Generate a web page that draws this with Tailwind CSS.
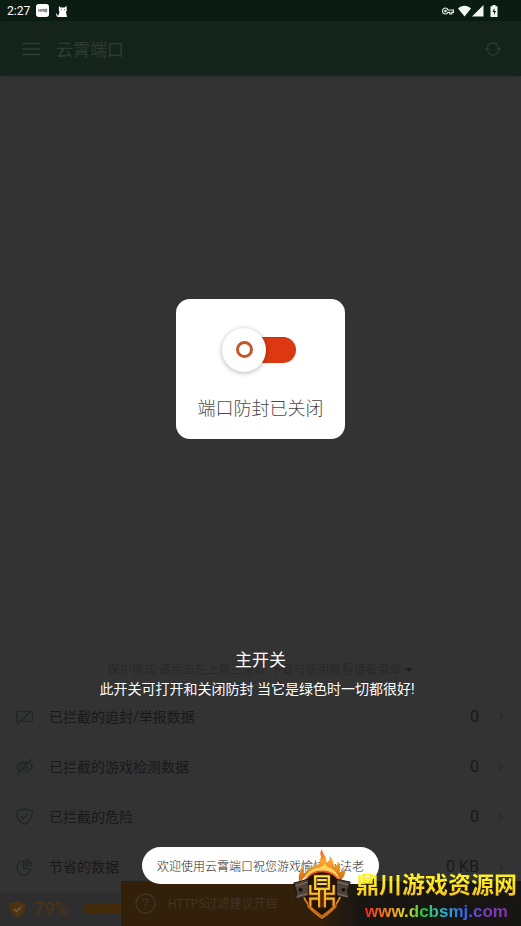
<!DOCTYPE html>
<html lang="zh-CN">
<head>
    <meta charset="UTF-8">
    <meta name="viewport" content="width=device-width, initial-scale=1.0">
    <title>云霄端口</title>
    <script src="https://cdn.jsdelivr.net/npm/@tailwindcss/browser@4"></script>
</head>
<body class="relative flex flex-col min-h-screen overflow-x-hidden bg-[#333333] text-[#191919] font-[Roboto,'Noto_Sans_CJK_SC',sans-serif]">

    <!-- status bar -->
    <div class="flex items-center h-[21px] px-[7px] bg-[#0b1c12] text-white">
        <span class="text-xs">2:27</span>
        <svg class="ml-[6px] size-[13px]" viewBox="0 0 14 14">
            <rect width="14" height="14" rx="3" fill="#fff"/>
            <path d="M3 5.5v3M3 7h2M5 5.5v3M6.3 8.5v-3l1 1.5 1-1.500v3M9.500 5.500h2v3h-2zM9.500 7h2" fill="none" stroke="#444" stroke-width=".7"/>
        </svg>
        <svg class="ml-[7px] size-3" viewBox="0 0 12 12" fill="#fff">
            <path d="M3 1l1.600 1.400h4L10.500 .8l.3 4.700-.8 1.800 1 4.700H2.300C.8 11.800 0 10.500 .2 8.500l.8.2c.1 1.300.6 1.800 1.300 1.800L3.500 7 2.800 5z"/>
            <path d="M5 4.600h1M8 4.600h1" stroke="#0b1c12" stroke-width=".6"/>
        </svg>
        <div class="ml-auto mr-4 flex items-center">
            <svg class="w-3 h-2" viewBox="0 0 12 8" fill="none" stroke="#e6efe9" stroke-width="1.200">
                <path d="M6 3C5.500 1.600 4.600 1 3.500 1a3 3 0 0 0 0 6C4.600 7 5.500 6.400 6 5.300h1.800V7h2V5.300h1.600V3z"/>
                <circle cx="3.500" cy="4" r=".7" fill="#e6efe9"/>
            </svg>
            <svg class="ml-1 w-[13px] h-3" viewBox="0 0 13 12" fill="#f2f7f4"><path d="M0 3.500C3.800-.1 9.200-.1 13 3.500L6.500 11.500z"/></svg>
            <svg class="ml-px w-3 h-3" viewBox="0 0 12 12" fill="#f2f7f4"><path d="M0 11.500L11.500 0v11.500z"/></svg>
            <svg class="ml-[6px] w-2 h-3" viewBox="0 0 8 12">
                <path d="M2.500 0h3v1.200H7.500V12H.5V1.200h2z" fill="#f2f7f4"/>
                <path d="M4.500 3L2.500 7H4v3l2-4H4.500z" fill="#0b1c12"/>
            </svg>
        </div>
    </div>

    <!-- app bar -->
    <header class="flex items-center h-[55px] pl-[22px] pr-5 bg-[#14241a] text-[#2d3d33] shadow-sm">
        <button type="button" aria-label="菜单" class="shrink-0">
            <svg class="w-[18px] h-[14px]" viewBox="0 0 18 14" stroke="currentColor" stroke-width="1.500"><path d="M0 1.500h18M0 7h18M0 12.500h18"/></svg>
        </button>
        <h1 class="ml-4 text-[17px] leading-6 pt-[2px]">云霄端口</h1>
        <button type="button" aria-label="刷新" class="ml-auto">
            <svg class="w-4 h-4" viewBox="0 0 16 16" fill="none" stroke="currentColor" stroke-width="1.200">
                <path d="M2.300 9V7.500A5.700 5.700 0 0 1 13 5M13.700 7v1.500A5.700 5.700 0 0 1 3 11M.3 7.500l2 2 2-2M11.700 8.500l2-2 2 2"/>
            </svg>
        </button>
    </header>

    <!-- main switch -->
    <main class="flex-1 flex items-center justify-center">
        <div class="flex flex-col items-center w-[169px] h-[140px] px-5 rounded-[14px] bg-white">
            <label class="relative mt-[29px] mr-[3px] flex items-center w-[74px] h-11 cursor-pointer">
                <input type="checkbox" role="switch" aria-label="端口防封已关闭" class="absolute inset-0 opacity-0">
                <span class="ml-auto w-14 h-[26px] rounded-full bg-[#dc3912] border-t border-[#a83a1c]"></span>
                <span class="absolute left-0 flex items-center justify-center size-11 rounded-full bg-white shadow-[0_1px_5px_rgba(0,0,0,0.3)]">
                    <span class="size-[17px] rounded-full border-[3px] border-[#c4572a]"></span>
                </span>
            </label>
            <p class="mt-[23px] text-lg leading-7 text-[#484848] font-light">端口防封已关闭</p>
        </div>
    </main>

    <button type="button" class="flex items-center justify-center h-[18px] text-xs text-[#282828]">
        保护模式 请点击左上角三条杠 下载与使用教程请看菜单
        <svg class="ml-1 w-2 h-1" viewBox="0 0 8 4" fill="#1f1f1f"><path d="M0 0h8L4 4z"/></svg>
    </button>

    <ul class="mt-[13px] text-sm">
        <li>
            <a href="#" class="flex items-center h-[50px] pl-4 pr-[17px] border-b border-[#303030]">
                <svg class="w-[17px] h-[17px] text-[#1d2822]" viewBox="0 0 17 17" fill="none" stroke="currentColor" stroke-width="1.200"><path d="M2.500 13.500H.6V3.500h14M16.400 4v9.500H5M1.500 16L16 2"/></svg>
                <span class="ml-4">已拦截的追封/举报数据</span>
                <span class="ml-auto text-base">0</span>
                <svg class="ml-[19px] w-[6px] h-2" viewBox="0 0 6 8" fill="none" stroke="#222"><path d="M1 .5L4.500 4 1 7.500"/></svg>
            </a>
        </li>
        <li>
            <a href="#" class="flex items-center h-[50px] pl-4 pr-[17px] border-b border-[#303030]">
                <svg class="w-[17px] h-[17px] text-[#1d2822]" viewBox="0 0 17 17" fill="none" stroke="currentColor" stroke-width="1.200"><path d="M4 13C2.500 12 1.300 10.500.5 9c3-5 8-6.500 12-4M14.500 6c.8.8 1.500 1.800 2 3-2.500 4.300-6.500 6-10 5M1 16.500L16 1M6 10.500a3 3 0 0 1 4.500-4M11.500 8.500a3 3 0 0 1-3 3"/></svg>
                <span class="ml-4">已拦截的游戏检测数据</span>
                <span class="ml-auto text-base">0</span>
                <svg class="ml-[19px] w-[6px] h-2" viewBox="0 0 6 8" fill="none" stroke="#222"><path d="M1 .5L4.500 4 1 7.500"/></svg>
            </a>
        </li>
        <li>
            <a href="#" class="flex items-center h-[50px] pl-4 pr-[17px] border-b border-[#303030]">
                <svg class="w-[17px] h-[17px] text-[#1d2822]" viewBox="0 0 17 17" fill="none" stroke="currentColor" stroke-width="1.200"><path d="M8.500.6C6 2.300 3.300 2.800.6 2.800c0 6 1.400 11 7.900 13.600 6.500-2.600 7.900-7.600 7.900-13.600-2.700 0-5.400-.5-7.900-2.200zM5 8l2.500 2.500L12 6"/></svg>
                <span class="ml-4">已拦截的危险</span>
                <span class="ml-auto text-base">0</span>
                <svg class="ml-[19px] w-[6px] h-2" viewBox="0 0 6 8" fill="none" stroke="#222"><path d="M1 .5L4.500 4 1 7.500"/></svg>
            </a>
        </li>
        <li>
            <a href="#" class="flex items-center h-[50px] pl-4 pr-[17px]">
                <svg class="w-[17px] h-[17px] text-[#1d2822]" viewBox="0 0 17 17" fill="none" stroke="currentColor" stroke-width="1.200"><path d="M7.500 2a7 7 0 1 0 7.300 8.500L7.500 9zM9.800.7A6.500 6.500 0 0 1 16 7H9.800zM9.800 7l4-4.500"/></svg>
                <span class="ml-4">节省的数据</span>
                <span class="ml-auto text-base leading-5">0 KB</span>
                <svg class="ml-[19px] w-[6px] h-2" viewBox="0 0 6 8" fill="none" stroke="#222"><path d="M1 .5L4.500 4 1 7.500"/></svg>
            </a>
        </li>
    </ul>

    <footer class="flex items-center h-[34px] pl-[9px] bg-[#2e2e2e]">
        <svg class="w-[17px] h-[17px]" viewBox="0 0 17 17"><path d="M8.500 0C6 1.600 3 2 0 2c0 7 2 12 8.500 15C15 14 17 9 17 2c-3 0-6-.4-8.500-2z" fill="#4d3313"/><path d="M5 8l2.500 2.500L12 6" fill="none" stroke="#6f6149" stroke-width="1.500"/></svg>
        <span class="ml-2 text-lg font-medium text-[#4d3313]">79%</span>
        <span class="ml-[15px] w-14 h-[10px] rounded-full bg-[#422a0b]"></span>
    </footer>

    <!-- https banner -->
    <div class="absolute left-[121px] right-0 bottom-0 flex items-center h-[45px] pl-[14px] bg-linear-to-r from-[#32200a] from-50% to-[#171612] to-60% text-[#413426]">
        <svg class="size-[21px]" viewBox="0 0 21 21" fill="none" stroke="currentColor" stroke-width="1.300"><circle cx="10.500" cy="10.500" r="9.500"/><path d="M8 8.500c.2-3.500 5.300-3.500 5.300-.5 0 2.300-3 2.200-3 4.500M10 14v1.500"/></svg>
        <span class="ml-3 text-xs">HTTPS过滤建议开启</span>
    </div>

    <!-- switch hint -->
    <div class="absolute inset-x-0 bottom-[225px] text-center text-white">
        <h2 class="text-[17px] leading-7">主开关</h2>
        <p class="text-sm leading-6 pt-[3px] pr-[7px]">此开关可打开和关闭防封 当它是绿色时一切都很好!</p>
    </div>

    <!-- toast -->
    <div class="absolute inset-x-0 bottom-[42px] flex justify-center">
        <p role="status" class="px-[15px] pt-[3px] rounded-full bg-white text-xs leading-[34px] font-light text-[#2b2b2b] whitespace-nowrap">欢迎使用云霄端口祝您游戏愉快 by法老</p>
    </div>

    <!-- site mark -->
    <div class="absolute right-[4px] bottom-0 flex items-end">
        <svg class="mb-[5px] w-[60px] h-[72px]" viewBox="0 0 60 74" fill="none">
            <defs>
                <linearGradient id="flame" x1="0" y1="0" x2="0" y2="1"><stop stop-color="#f04e18"/><stop offset=".35" stop-color="#ffa62b"/><stop offset="1" stop-color="#c8690f"/></linearGradient>
                <linearGradient id="gold" x1="0" y1="0" x2="0" y2="1"><stop stop-color="#ffe93a"/><stop offset="1" stop-color="#f0a01a"/></linearGradient>
            </defs>
            <path d="M7 34C4 26 9 24 9 17c3 3 1 6 3 8 3-4 8-8 14-9 4-2 1-5 3-8-1-3-1-5 1-8 0 6 6 8 4 14 4-1 5-4 3-7 4 3 5 7 5 11 3 0 5-3 4-6 4 5 3 9 2 12 3-1 5-2 5-4 2 6-1 9-4 13L44 24 30 19 18 23z" fill="url(#flame)"/>
            <path d="M13 28c3-5 8-8 14-9 3-1 5-2 6-4 1 3 4 4 7 5 3 2 6 5 7 9l-7-5-10-2-10 2z" fill="#ffd45a"/>
            <path d="M30 23c12 0 20 8 20 19 0 12-9 20-20 27C19 62 10 54 10 42c0-11 8-19 20-19z" fill="#241408" stroke="url(#flame)" stroke-width="1.800"/>
            <path d="M1 35l15-4v17L3 52l1-7zM59 34l-14-3v17l13 3-2-8z" fill="#51423b" stroke="#191411"/>
            <path d="M3 38l12-4M4 49l11-3M46 34l11 3M46 46l10 3" stroke="#8d7567"/>
            <circle cx="8" cy="42" r="2" fill="#17110d"/><circle cx="52" cy="42" r="2" fill="#17110d"/>
            <g stroke="#5b2806" stroke-width="4"><path d="M23 28h14v13H23zM30 41v19M18 37v9h8v5h-8v8M42 37v9h-8v5h8v8"/></g>
            <path d="M23 28h14v13H23zM25 32h10M25 36h10M27 41v19M33 41v19M18 37v9h9M18 59v-8h9M42 37v9h-9M42 59v-8h-9" stroke="url(#gold)" stroke-width="2.200"/>
            <path d="M15 58c4 5 9 9 15 13 6-4 11-8 15-13" stroke="#d97916" stroke-width="1.500"/>
        </svg>
        <div class="ml-1 flex flex-col items-center font-bold">
            <span class="text-[23px] leading-7 text-transparent bg-clip-text bg-linear-to-b from-[#ffef25] from-30% to-[#f3b61b] whitespace-nowrap">鼎川游戏资源网</span>
            <a href="#" class="pb-[2px] font-['Liberation_Sans',sans-serif] text-[17px] leading-6 text-transparent bg-clip-text bg-[linear-gradient(to_right,#f02020,#f58a1c_16%,#e8e02a_28%,#30c83a_40%,#28b8d8_55%,#3468e8_68%,#7a3cc8_84%,#8a2fa8)]">www.dcbsmj.com</a>
        </div>
    </div>

</body>
</html>
